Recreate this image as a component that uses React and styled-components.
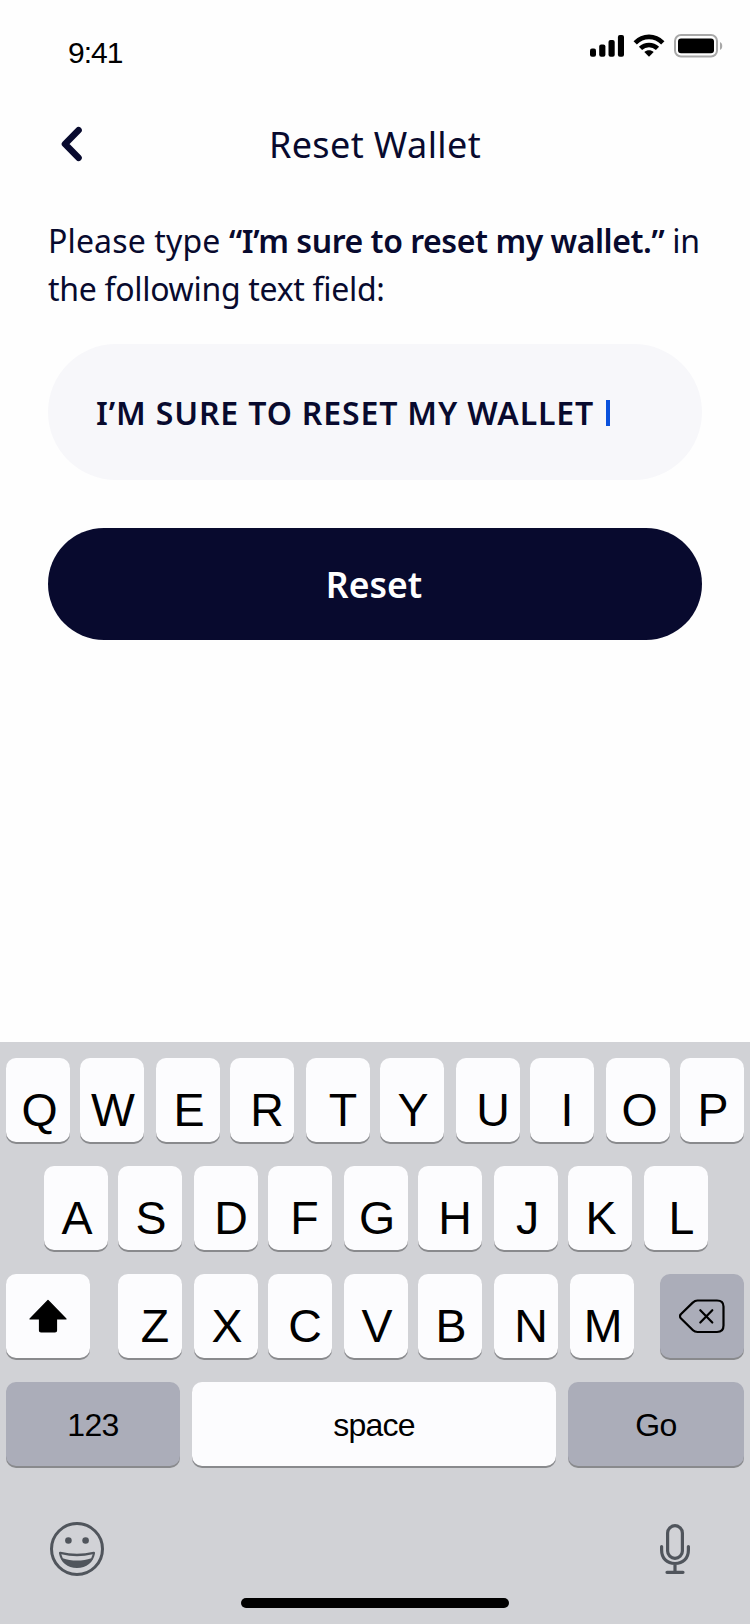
import React from 'react';
import styled, { createGlobalStyle } from 'styled-components';

const INK = '#080a2e';

const GlobalStyle = createGlobalStyle`
  * { box-sizing: border-box; }
  body { margin: 0; background: #fefefe; }
  button { border: 0; padding: 0; margin: 0; background: none; font: inherit; color: inherit; }
`;

const Screen = styled.div`
  width: 750px;
  height: 1624px;
  display: flex;
  flex-direction: column;
  background: #fefefe;
  color: ${INK};
  font-family: 'Noto Sans', sans-serif;
  overflow: hidden;
`;

const StatusBar = styled.div`
  height: 88px;
  display: flex;
  justify-content: space-between;
  padding: 34px 27px 0 68px;
`;

const Time = styled.div`
  margin-top: 1px;
  font: 30px/36px 'Liberation Sans', sans-serif;
  letter-spacing: -1px;
  color: #000;
`;

const StatusIcons = styled.div`
  display: flex;
  gap: 9px;
`;

const Header = styled.header`
  height: 112px;
  display: grid;
  grid-template-columns: 62px 1fr 62px;
  align-items: center;
`;

const BackButton = styled.button`
  display: flex;
  justify-content: flex-end;
  width: 82px;
`;

const Title = styled.h1`
  margin: 2px 0 0;
  text-align: center;
  font-size: 36px;
  font-weight: 400;
  line-height: 48px;
  letter-spacing: 0.4px;
`;

const Content = styled.main`
  flex: 1;
  display: flex;
  flex-direction: column;
  padding: 17px 48px 0;
`;

const Prompt = styled.p`
  margin: 0 0 31px;
  font-size: 32px;
  line-height: 48px;
  letter-spacing: -0.3px;
  white-space: nowrap;
`;

const Lead = styled.span`
  letter-spacing: 0.15px;
`;

const Phrase = styled.strong`
  font-weight: 600;
  letter-spacing: -0.45px;
`;

const Field = styled.div`
  height: 136px;
  display: flex;
  align-items: center;
  padding: 1px 48px 0;
  border-radius: 68px;
  background: #f7f7fa;
  font-size: 32px;
  font-weight: 600;
  line-height: 48px;
  letter-spacing: 0.85px;
  white-space: nowrap;
`;

const Caret = styled.span`
  width: 4px;
  height: 26px;
  margin: 1px 0 0 12px;
  background: #0a51dc;
`;

const ResetButton = styled.button`
  height: 112px;
  margin-top: 48px;
  padding-right: 2px;
  border-radius: 56px;
  background: ${INK};
  color: #fff;
  font-size: 35.5px;
  font-weight: 600;
`;

const Keyboard = styled.section`
  height: 582px;
  padding-top: 16px;
  display: flex;
  flex-direction: column;
  background: #d1d2d6;
  color: #000;
  font-family: 'Liberation Sans', sans-serif;
`;

const KeyRow = styled.div`
  height: 84px;
  margin-bottom: 24px;
  padding-left: ${p => p.$inset || 6}px;
  display: flex;
`;

const Key = styled.button`
  width: ${p => p.$w || 64}px;
  height: 84px;
  margin-right: ${p => p.$gap || 0}px;
  display: flex;
  align-items: center;
  justify-content: center;
  border-radius: 10px;
  background: ${p => (p.$dark ? '#abadb9' : '#fcfcfe')};
  box-shadow: 0 2px 0 #898a8d;
`;

const Letter = styled.span`
  padding: 20px 0 0 ${p => p.$shift * 2}px;
  font-size: 46.5px;
  line-height: 52px;
`;

const KeyLabel = styled.span`
  padding-top: 1px;
  font-size: 32px;
  line-height: 40px;
  letter-spacing: ${p => p.$track || 0}px;
`;

const Dock = styled.div`
  height: 84px;
  padding: 32px 60px 0 49px;
  display: flex;
  justify-content: space-between;
`;

const HomeIndicator = styled.div`
  width: 268px;
  height: 10px;
  margin: 24px auto 0;
  border-radius: 5px;
  background: #000;
`;

/* letter, rightward nudge, gap after the key */
const TOP = [['Q', 1.5, 10], ['W', 1, 12], ['E', 1, 10], ['R', 5, 12], ['T', 5, 10], ['Y', 1, 12], ['U', 5, 10], ['I', 5, 12], ['O', 1.5, 10], ['P', 1, 0]];
const HOME = [['A', 1, 10], ['S', 1, 12], ['D', 5, 10], ['F', 4.5, 12], ['G', 1, 10], ['H', 5, 12], ['J', 1.5, 10], ['K', 1, 12], ['L', 5.5, 0]];
const BOTTOM = [['Z', 5, 12], ['X', 1, 10], ['C', 5, 12], ['V', 1, 10], ['B', 1, 12], ['N', 5, 12], ['M', 1, 26]];

const letters = list => list.map(([ch, shift, gap]) => (
  <Key key={ch} $gap={gap}><Letter $shift={shift}>{ch}</Letter></Key>
));

const Signal = () => (
  <svg width="34" height="24" viewBox="0 0 34 24">
    <rect x="0" y="14.5" width="6" height="8.3" rx="2" />
    <rect x="9.2" y="10.5" width="6.2" height="12.3" rx="2" />
    <rect x="18.5" y="6" width="6.2" height="16.8" rx="2" />
    <rect x="27.9" y="1" width="6.1" height="21.8" rx="2" />
  </svg>
);

const Wifi = () => (
  <svg width="32" height="24" viewBox="0 0 32 24">
    <g fill="none" stroke="#000" strokeWidth="4.6">
      <path d="M2.2 8.9C10 .9 22 .9 29.8 8.9" />
      <path d="M7.500 14.400C12.300 9.800 19.700 9.800 24.500 14.400" />
    </g>
    <path d="M16 22.800l-4.700-4.700c2.700-2.400 6.700-2.400 9.400 0z" />
  </svg>
);

const Battery = () => (
  <svg width="49" height="24" viewBox="0 0 49 24">
    <rect x="1" y="1" width="42" height="21.500" rx="6" fill="none" stroke="#a8a8a8" strokeWidth="2" />
    <rect x="4" y="4.500" width="36" height="14.700" rx="3" />
    <path d="M46 8c3 1.200 3 6.800 0 8z" fill="#a8a8a8" />
  </svg>
);

const Chevron = () => (
  <svg width="22" height="36" viewBox="0 0 22 36">
    <path d="M18.500 4.200L5 18l13.500 13.800" fill="none" stroke={INK} strokeWidth="6.600" strokeLinecap="round" strokeLinejoin="round" />
  </svg>
);

const Shift = () => (
  <svg width="40" height="34" viewBox="0 0 40 34">
    <path d="M20 1.500L38 20H28.500V31.500a1.500 1.500 0 0 1-1.500 1.500H13A1.500 1.500 0 0 1 11.500 31.500V20H2z" stroke="#000" strokeWidth="1.200" strokeLinejoin="round" />
  </svg>
);

const Backspace = () => (
  <svg width="46" height="36" viewBox="0 0 46 36" fill="none" stroke="#000" strokeWidth="2.200" strokeLinecap="round" strokeLinejoin="round">
    <path d="M18.500 2.500H38C42.500 2.500 44.500 4.500 44.500 8.500V27.500C44.500 31.500 42.500 34 38 34H18.500C16.500 34 15.300 33.500 14 32.200L1.800 20.300Q0.100 18.200 1.800 16.200L14 4.400C15.300 3 16.500 2.500 18.500 2.500z" />
    <path d="M21.300 12.200l12 12.300M33.300 12.200l-12 12.300" />
  </svg>
);

const Emoji = () => (
  <svg width="56" height="56" viewBox="0 0 56 56">
    <circle cx="28" cy="27" r="25.500" fill="none" stroke="#50555c" strokeWidth="3" />
    <circle cx="19.400" cy="18.500" r="3.300" fill="#50555c" />
    <circle cx="36.600" cy="18.500" r="3.300" fill="#50555c" />
    <path d="M11.500 29.700Q28 34 44.500 29.700Q46.500 29.300 46 31.600C44.500 40.300 37.500 46 28 46S11.500 40.300 10 31.600Q9.500 29.300 11.500 29.700z" fill="#50555c" />
    <path d="M12.300 32.300Q28 36 43.700 32.300L42.200 36.200C34 39.300 22 39.300 13.800 36.200z" fill="#d1d2d6" />
  </svg>
);

const Mic = () => (
  <svg width="30" height="54" viewBox="0 0 30 54" fill="none" stroke="#50555c" strokeWidth="3.200" strokeLinecap="round">
    <rect x="7.600" y="3.600" width="14.800" height="32.800" rx="7.400" />
    <path d="M1.600 24.500V28C1.600 36.500 7 41.500 15 41.500S28.400 36.500 28.400 28V24.500M15 42v8M7 50.300h16" />
  </svg>
);

export default function App() {
  return (
    <Screen>
      <GlobalStyle />
      <StatusBar>
        <Time>9:41</Time>
        <StatusIcons><Signal /><Wifi /><Battery /></StatusIcons>
      </StatusBar>
      <Header>
        <BackButton aria-label="Back"><Chevron /></BackButton>
        <Title>Reset Wallet</Title>
      </Header>
      <Content>
        <Prompt>
          <Lead>Please type </Lead><Phrase>“I’m sure to reset my wallet.”</Phrase> in<br />
          the following text field:
        </Prompt>
        <Field>I’M SURE TO RESET MY WALLET<Caret /></Field>
        <ResetButton>Reset</ResetButton>
      </Content>
      <Keyboard>
        <KeyRow>{letters(TOP)}</KeyRow>
        <KeyRow $inset={44}>{letters(HOME)}</KeyRow>
        <KeyRow>
          <Key $w={84} $gap={28}><Shift /></Key>
          {letters(BOTTOM)}
          <Key $w={84} $dark><Backspace /></Key>
        </KeyRow>
        <KeyRow>
          <Key $w={174} $gap={12} $dark><KeyLabel $track={-0.6}>123</KeyLabel></Key>
          <Key $w={364} $gap={12}><KeyLabel $track={-0.8}>space</KeyLabel></Key>
          <Key $w={176} $dark><KeyLabel $track={-0.5}>Go</KeyLabel></Key>
        </KeyRow>
        <Dock><Emoji /><Mic /></Dock>
        <HomeIndicator />
      </Keyboard>
    </Screen>
  );
}
